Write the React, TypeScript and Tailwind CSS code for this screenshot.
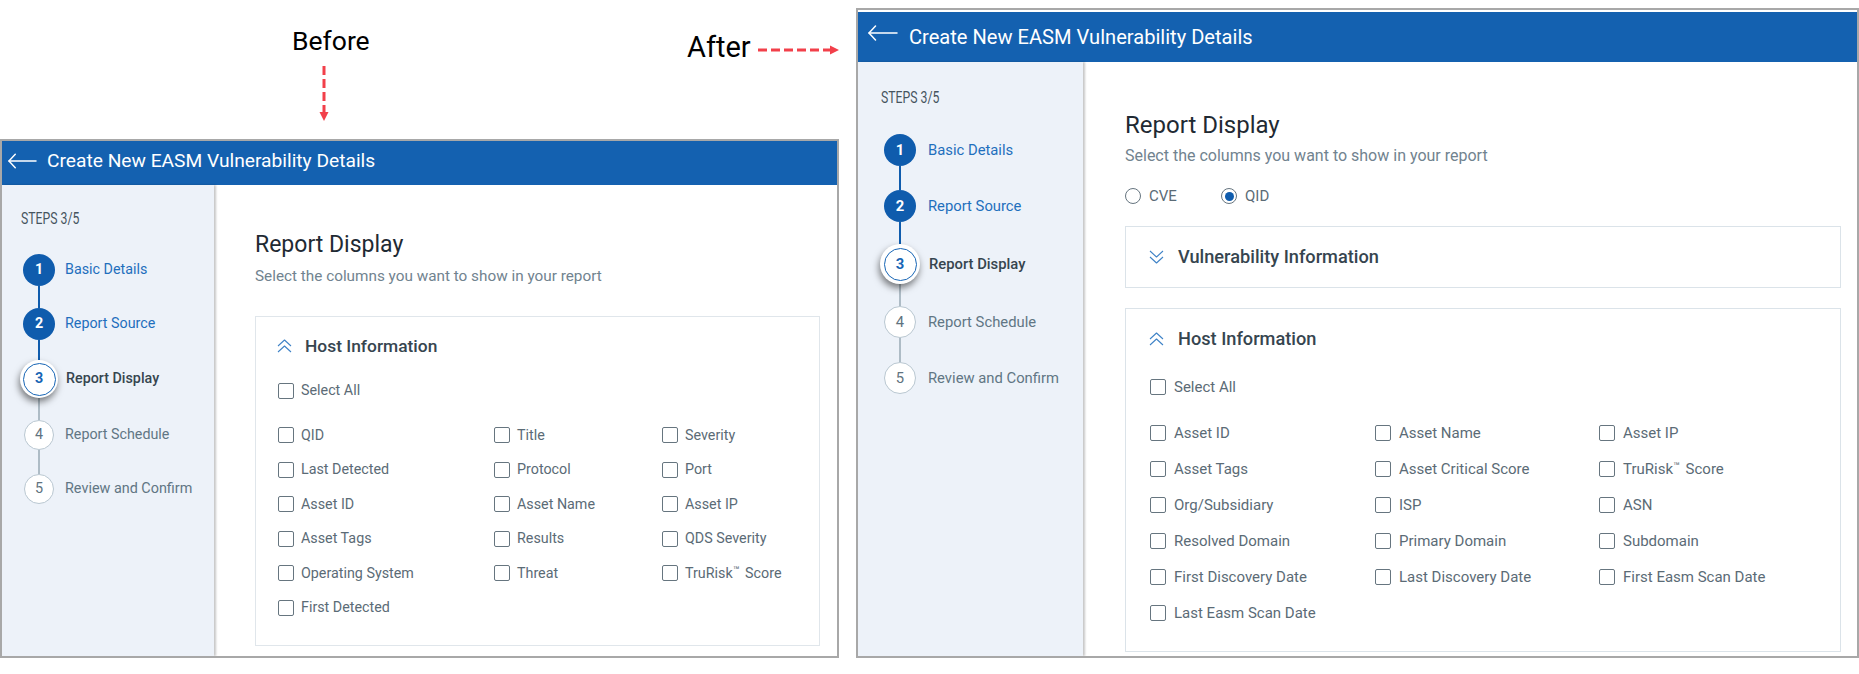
import React from "react";

const font = { fontFamily: "Roboto, 'Noto Sans', sans-serif" };

function BackArrow({ className }: { className: string }) {
  return (
    <svg className={className} viewBox="0 0 30 16" fill="none" stroke="#fff" strokeWidth="1.5" strokeLinecap="round" strokeLinejoin="round">
      <path d="M1 8H29" />
      <path d="M7.5 1 1 8l6.5 7" />
    </svg>
  );
}

function Chevrons({ down }: { down?: boolean }) {
  return (
    <svg className={`w-[15px] h-[14px] shrink-0 ${down ? "rotate-180" : ""}`} viewBox="0 0 15 14" fill="none" stroke="#3f83c7" strokeWidth="1.1" strokeLinejoin="round">
      <path d="M1 7 7.500 1l6.500 6" />
      <path d="M1 13 7.500 7l6.500 6" />
    </svg>
  );
}

function Check({ label, className }: { label: React.ReactNode; className: string }) {
  return (
    <label className={`flex items-center text-[#5b6b76] ${className}`}>
      <input type="checkbox" className="appearance-none w-[16px] h-[16px] shrink-0 rounded-[2px] border border-[#66757f] bg-white" />
      <span>{label}</span>
    </label>
  );
}

const TM = (
  <>
    TruRisk<sup className="text-[11px] align-baseline relative -top-[4px] mr-[2px]">™</sup> Score
  </>
);

function Done({ n, label, size, gap }: { n: number; label: string; size: string; gap: string }) {
  return (
    <div className={`flex items-center ${gap}`}>
      <div className="w-[38px] flex justify-center shrink-0">
        <div className={`w-[32px] h-[32px] rounded-full bg-[#0f5cad] text-white font-bold flex items-center justify-center ${size}`}>{n}</div>
      </div>
      <span className={`text-[#1f6fbd] ${size}`}>{label}</span>
    </div>
  );
}

function Current({ n, label, size, outer, gap }: { n: number; label: string; size: string; outer: string; gap: string }) {
  return (
    <div className={`flex items-center relative ${gap}`}>
      <div className="w-[38px] flex justify-center shrink-0">
        <div className={`rounded-full bg-white shadow-[-1px_4px_7px_rgba(0,0,0,0.5)] flex items-center justify-center shrink-0 ${outer}`}>
          <div className={`w-[33px] h-[33px] rounded-full border-[1.5px] border-[#1765b5] text-[#1765b5] font-bold flex items-center justify-center ${size}`}>{n}</div>
        </div>
      </div>
      <span className={`text-[#36454f] font-medium ${size}`}>{label}</span>
    </div>
  );
}

function Todo({ n, label, size, circle, gap }: { n: number; label: string; size: string; circle: string; gap: string }) {
  return (
    <div className={`flex items-center ${gap}`}>
      <div className="w-[38px] flex justify-center shrink-0">
        <div className={`rounded-full bg-white border border-[#b9c7d1] text-[#5f7380] flex items-center justify-center ${size} ${circle}`}>{n}</div>
      </div>
      <span className={`text-[#617684] ${size}`}>{label}</span>
    </div>
  );
}

function Line({ blue, className }: { blue?: boolean; className: string }) {
  return <div className={`w-[2px] ml-[18px] ${blue ? "bg-[#0f5cad]" : "bg-[#aebcc6]"} ${className}`} />;
}

function Steps({ className }: { className: string }) {
  return (
    <div className={`uppercase text-[#46545e] text-[17px] leading-[20px] scale-x-[0.72] origin-left whitespace-nowrap ${className}`}>STEPS 3/5</div>
  );
}

const beforeItems = ["QID", "Title", "Severity", "Last Detected", "Protocol", "Port", "Asset ID", "Asset Name", "Asset IP", "Asset Tags", "Results", "QDS Severity", "Operating System", "Threat", TM, "First Detected"];
const afterItems = ["Asset ID", "Asset Name", "Asset IP", "Asset Tags", "Asset Critical Score", TM, "Org/Subsidiary", "ISP", "ASN", "Resolved Domain", "Primary Domain", "Subdomain", "First Discovery Date", "Last Discovery Date", "First Easm Scan Date", "Last Easm Scan Date"];

export default function App() {
  return (
    <div style={font} className="w-[1859px] h-[674px] bg-white flex items-start overflow-hidden">
      {/* Before column */}
      <div className="w-[856px] shrink-0">
        <div className="h-[139px] flex pl-[292px]">
          <div className="w-[395px] shrink-0 pt-[23px]">
            <div className="text-[26.5px] leading-[36px] text-black">Before</div>
            <svg className="w-[12px] h-[56px] mt-[7px] ml-[26px]" viewBox="0 0 12 56" fill="#f2404a">
              <path d="M6 0V46" stroke="#f2404a" strokeWidth="3" strokeDasharray="9 4" />
              <path d="M1.5 46h9L6 55z" />
            </svg>
          </div>
          <div className="flex items-start pt-[29px]">
            <div className="text-[29px] leading-[36px] text-black">After</div>
            <svg className="w-[81px] h-[10px] mt-[16px] ml-[7px]" viewBox="0 0 81 10" fill="#f2404a">
              <path d="M0 5H73" stroke="#f2404a" strokeWidth="3" strokeDasharray="9 4" />
              <path d="M72 .5v9l9-4.500z" />
            </svg>
          </div>
        </div>

        <div className="w-[839px] h-[519px] border-2 border-[#a8a8a8] flex flex-col overflow-hidden">
          <div className="h-[44px] shrink-0 bg-[#1461b0] flex items-center pl-[6px] text-white">
            <BackArrow className="w-[29px] h-[16px] shrink-0 -mt-[4px]" />
            <span className="ml-[10px] -mt-[3px] text-[19.2px]">Create New EASM Vulnerability Details</span>
          </div>
          <div className="flex-1 flex min-h-0">
            <div className="w-[212px] shrink-0 bg-[#edf2f9] relative shadow-[2px_0_2px_rgba(0,0,0,0.22)] pl-[18px] pt-[20px]">
              <Steps className="ml-[1px] mt-[3px]" />
              <div className="mt-[26px]">
                <Done n={1} label="Basic Details" size="text-[14.3px]" gap="gap-[7px]" />
                <Line blue className="h-[22px]" />
                <Done n={2} label="Report Source" size="text-[14.3px]" gap="gap-[7px]" />
                <Line blue className="h-[20px]" />
                <Current n={3} label="Report Display" size="text-[14.3px]" outer="w-[38px] h-[38px]" gap="gap-[8px]" />
                <Line className="h-[22px]" />
                <Todo n={4} label="Report Schedule" size="text-[14.3px]" circle="w-[30px] h-[30px]" gap="gap-[7px]" />
                <Line className="h-[24px]" />
                <Todo n={5} label="Review and Confirm" size="text-[14.4px]" circle="w-[30px] h-[30px]" gap="gap-[7px]" />
              </div>
            </div>
            <div className="flex-1 pl-[41px] pt-[45px] min-w-0">
              <h2 className="text-[23px] leading-[30px] text-[#1f2a33]">Report Display</h2>
              <p className="mt-[6px] text-[15.3px] leading-[20px] text-[#71838f]">Select the columns you want to show in your report</p>
              <div className="mt-[30px] w-[565px] h-[330px] border-[1.5px] border-[#e0e6eb] pl-[21px]">
                <div className="h-[58px] flex items-center text-[#36454f]">
                  <Chevrons />
                  <span className="ml-[13px] text-[17.4px] font-medium">Host Information</span>
                </div>
                <Check label="Select All" className="h-[32px] gap-[7px] text-[14.3px] ml-[1px]" />
                <div className="mt-[11px] grid grid-cols-[216px_168px_1fr] auto-rows-[34.5px] ml-[1px]">
                  {beforeItems.map((it, i) => (
                    <Check key={i} label={it} className="gap-[7px] text-[14.3px] whitespace-nowrap" />
                  ))}
                </div>
              </div>
            </div>
          </div>
        </div>
      </div>

      {/* After column */}
      <div className="w-[1003px] shrink-0 h-[650px] mt-[8px] border-2 border-[#a8a8a8] flex flex-col overflow-hidden">
        <div className="h-[2px] shrink-0 bg-white" />
        <div className="h-[50px] shrink-0 bg-[#1461b0] flex items-center pl-[10px] text-white">
          <BackArrow className="w-[30px] h-[16px] shrink-0 -mt-[8px]" />
          <span className="ml-[11px] text-[20.1px]">Create New EASM Vulnerability Details</span>
        </div>
        <div className="flex-1 flex min-h-0">
          <div className="w-[225px] shrink-0 bg-[#edf2f9] relative shadow-[2px_0_2px_rgba(0,0,0,0.22)] pl-[23px] pt-[20px]">
            <Steps className="mt-[5px]" />
            <div className="mt-[27px]">
              <Done n={1} label="Basic Details" size="text-[14.8px]" gap="gap-[9px]" />
              <Line blue className="h-[24px]" />
              <Done n={2} label="Report Source" size="text-[14.8px]" gap="gap-[9px]" />
              <Line blue className="h-[22px]" />
              <Current n={3} label="Report Display" size="text-[14.8px]" outer="w-[40px] h-[40px]" gap="gap-[10px]" />
              <Line className="h-[22px]" />
              <Todo n={4} label="Report Schedule" size="text-[14.8px]" circle="w-[32px] h-[32px]" gap="gap-[9px]" />
              <Line className="h-[24px]" />
              <Todo n={5} label="Review and Confirm" size="text-[14.8px]" circle="w-[32px] h-[32px]" gap="gap-[9px]" />
            </div>
          </div>
          <div className="flex-1 pl-[42px] pt-[48px] min-w-0">
            <h2 className="text-[24px] leading-[30px] text-[#1f2a33]">Report Display</h2>
            <p className="mt-[6px] text-[16px] leading-[20px] text-[#71838f]">Select the columns you want to show in your report</p>
            <div className="mt-[20px] h-[20px] flex items-center text-[15px] text-[#5b6b76]">
              <span className="w-[16px] h-[16px] rounded-full border-[1.5px] border-[#66757f] bg-white" />
              <span className="ml-[8px] w-[72px]">CVE</span>
              <span className="w-[16px] h-[16px] rounded-full border-[1.5px] border-[#66757f] bg-white flex items-center justify-center">
                <span className="w-[9px] h-[9px] rounded-full bg-[#0f5cad]" />
              </span>
              <span className="ml-[8px]">QID</span>
            </div>
            <div className="mt-[20px] w-[716px] h-[62px] border-[1.5px] border-[#dbe3e9] flex items-center pl-[23px] text-[#36454f]">
              <Chevrons down />
              <span className="ml-[14px] text-[18.2px] font-medium">Vulnerability Information</span>
            </div>
            <div className="mt-[20px] w-[716px] h-[344px] border-[1.5px] border-[#dbe3e9] pl-[23px]">
              <div className="h-[59px] flex items-center text-[#36454f]">
                <Chevrons />
                <span className="ml-[14px] text-[18.2px] font-medium">Host Information</span>
              </div>
              <Check label="Select All" className="mt-[2px] h-[34px] gap-[8px] text-[15px] ml-[1px]" />
              <div className="mt-[11px] grid grid-cols-[225px_224px_1fr] auto-rows-[36px] ml-[1px]">
                {afterItems.map((it, i) => (
                  <Check key={i} label={it} className="gap-[8px] text-[15px] whitespace-nowrap" />
                ))}
              </div>
            </div>
          </div>
        </div>
      </div>
    </div>
  );
}
